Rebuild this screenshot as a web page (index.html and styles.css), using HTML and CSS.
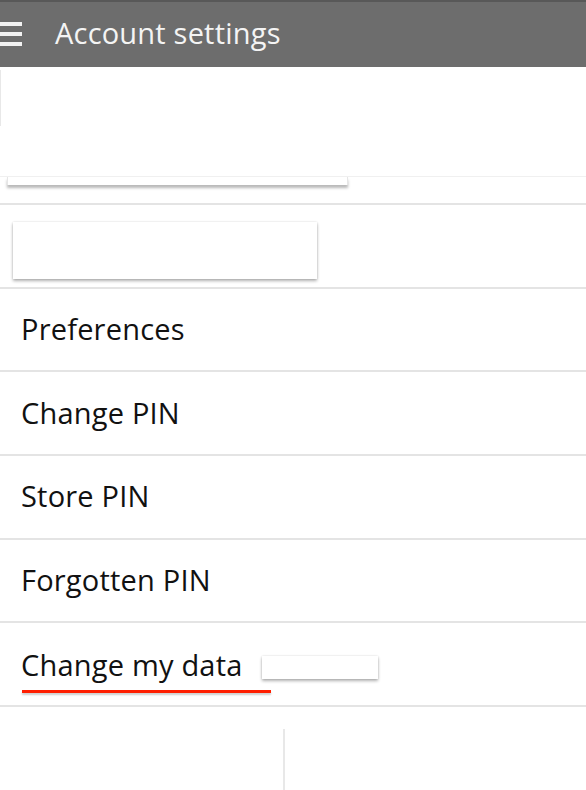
FILE: index.html
```html
<!DOCTYPE html>
<html lang="en">
<head>
  <meta charset="UTF-8">
  <title>Account settings</title>
  <link rel="stylesheet" href="styles.css">
</head>
<body>

  <header class="topbar">
    <div class="menu-icon">
      <span></span>
      <span></span>
      <span></span>
    </div>
    <h1 class="title">Account settings</h1>
  </header>

  <div class="intro">
    <div class="intro-space"></div>
    <div class="intro-line"></div>
    <div class="intro-card"></div>
  </div>

  <ul class="settings">
    <li class="row row-card">
      <div class="card card-wide"></div>
    </li>
    <li class="row"><span class="label">Preferences</span></li>
    <li class="row"><span class="label">Change PIN</span></li>
    <li class="row"><span class="label">Store PIN</span></li>
    <li class="row"><span class="label">Forgotten PIN</span></li>
    <li class="row row-active">
      <span class="label">Change my data</span>
      <div class="card card-small"></div>
    </li>
    <li class="row row-bottom">
      <div class="card card-bottom"></div>
    </li>
  </ul>

</body>
</html>
```

FILE: styles.css
```css
* {
  box-sizing: border-box;
}

body {
  margin: 0;
  width: 586px;
  height: 790px;
  overflow: hidden;
  background: #fff;
  font-family: 'Open Sans', 'Noto Sans', sans-serif;
  color: #111;
}

.topbar {
  height: 67px;
  background: #6d6d6d;
  border-top: 2px solid #585858;
  display: flex;
  align-items: center;
}

.menu-icon {
  width: 22px;
  display: flex;
  flex-direction: column;
  gap: 6px;
  margin-top: -2px;
}

.menu-icon span {
  display: block;
  height: 4px;
  background: #f2f2f2;
}

.title {
  margin: -4px 0 0 33px;
  font-size: 29px;
  font-weight: 400;
  color: #f4f4f4;
  letter-spacing: 0.2px;
}

.intro {
  height: 138px;
  border-bottom: 2px solid #e4e4e4;
}

.intro-space {
  height: 109px;
  padding-top: 3px;
}

.intro-space::before {
  content: '';
  display: block;
  width: 1px;
  height: 56px;
  background: #e8e8e8;
}

.intro-line {
  height: 1px;
  background: #f0f0f0;
}

.intro-card {
  margin-left: 7px;
  width: 341px;
  height: 8px;
  background: #fff;
  border-left: 1px solid #e6e6e6;
  border-right: 1px solid #e6e6e6;
  box-shadow: 0 3px 3px rgba(0, 0, 0, 0.28);
}

.settings {
  list-style: none;
  margin: 0;
  padding: 0;
}

.row {
  height: 83.7px;
  border-bottom: 2px solid #e4e4e4;
  display: flex;
  align-items: center;
  padding-left: 21px;
}

.label {
  font-size: 29px;
  letter-spacing: 0.2px;
  line-height: 1;
  padding-bottom: 2px;
}

.card {
  background: #fff;
  box-shadow: 0 2px 3px rgba(0, 0, 0, 0.3), 0 0 2px rgba(0, 0, 0, 0.12);
}

.row-card {
  align-items: flex-start;
  padding-left: 13px;
  padding-top: 17px;
}

.card-wide {
  width: 304px;
  height: 57px;
}

.row-active {
  position: relative;
}

.row-active .label {
  padding-bottom: 0;
}

.row-active::after {
  content: '';
  position: absolute;
  left: 22px;
  top: 67px;
  width: 249px;
  height: 3px;
  background: #ff1e00;
  box-shadow: 0 2px 2px rgba(0, 0, 0, 0.2);
}

.card-small {
  width: 116px;
  height: 23px;
  margin-left: 19px;
  margin-top: 6px;
}

.row-bottom {
  border-bottom: none;
  align-items: flex-start;
  padding-left: 283px;
  padding-top: 22px;
  height: 90px;
}

.card-bottom {
  width: 303px;
  height: 70px;
  box-shadow: none;
  border-left: 2px solid #e8e8e8;
}
```
